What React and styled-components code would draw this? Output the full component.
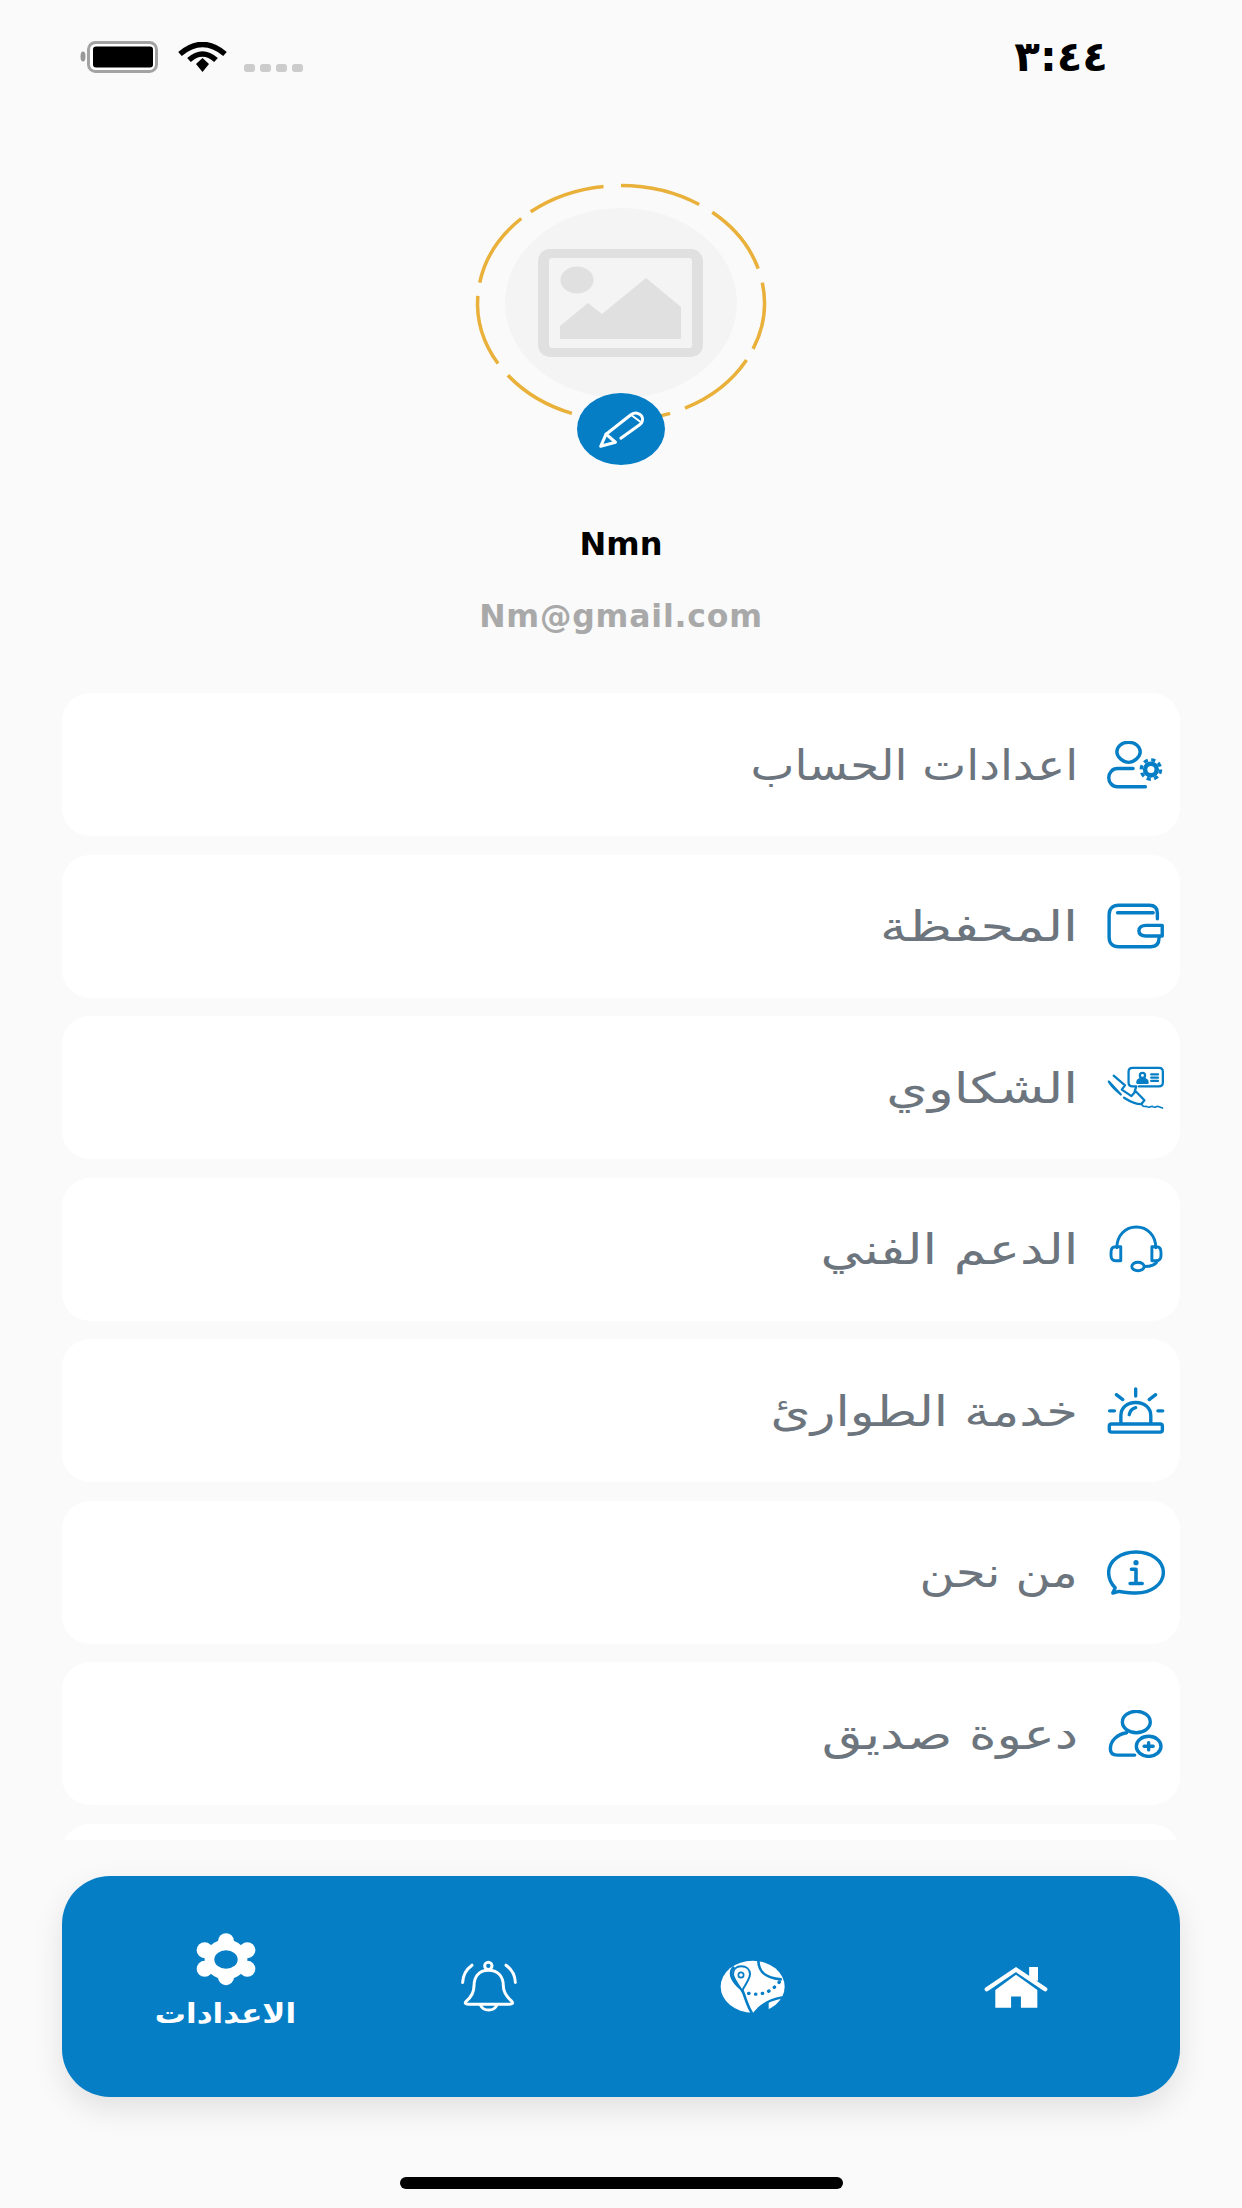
import React from "react";
import styled, { createGlobalStyle } from "styled-components";

const BLUE = "#057ec6";

const GlobalStyle = createGlobalStyle`
  html, body {
    margin: 0;
    padding: 0;
    background: #fafafa;
    font-family: "DejaVu Sans", sans-serif;
  }
`;

// ring dashes are not even on the ellipse, angles read off the screenshot
const ringDashes = [
  [-10, 23],
  [29, 63.5],
  [70, 103],
  [110, 142],
  [149, 183.5],
  [190, 226],
  [231, 263],
  [270, 303],
  [309.5, 343],
];

const ringPath = ([from, to]) => {
  const point = (deg) => {
    const t = (deg * Math.PI) / 180;
    return `${(621 + 143.5 * Math.cos(t)).toFixed(1)} ${(303 + 117.5 * Math.sin(t)).toFixed(1)}`;
  };
  return `M${point(from)} A143.5 117.5 0 0 1 ${point(to)}`;
};

const Line = (props) => (
  <g fill="none" stroke={BLUE} strokeWidth="10.5" strokeLinecap="round" strokeLinejoin="round" {...props} />
);

const UserGearIcon = () => (
  <svg viewBox="80 60 178 148" width="58" height="48">
    <Line>
      <path d="M146 64C124 64 110 78 110 94C110 110 130 126 146 126C162 126 182 110 182 94C182 78 168 64 146 64Z" />
      <path d="M160 145H112C96 145 85 158 85 173C85 188 96 201 112 201H198" />
      <circle cx="215" cy="148" r="18" strokeWidth="14" />
      <circle cx="215" cy="148" r="30" strokeWidth="10" strokeLinecap="butt" strokeDasharray="13 10.56" />
    </Line>
  </svg>
);

const WalletIcon = () => (
  <svg viewBox="80 546 178 142" width="58" height="46">
    <Line>
      <path d="M235 595V578C235 562 226 553 210 553H115C97 553 86 564 86 582V652C86 670 97 681 115 681H215C232 681 240 672 240 655V650" />
      <path d="M112 576H222" />
      <path d="M250 615H200C186 615 178 622 178 632C178 642 186 648 200 648H250Z" />
    </Line>
  </svg>
);

const ComplaintIcon = () => (
  <svg viewBox="80 72 178 136" width="58" height="44">
    <Line strokeWidth="7">
      <path d="M178 135H240C248 135 252 131 252 123V90C252 82 248 78 240 78H158C150 78 146 82 146 90V123C146 131 150 135 158 135H170L165 150" />
      <path d="M173 124C173 115 180 112 189 112C198 112 205 115 205 124Z" fill={BLUE} />
      <circle cx="189" cy="101" r="8" />
      <path d="M216 98H237M216 108H237M216 118H237" />
      <path d="M100 102L135 132L125 145L155 165L168 150L195 178L185 190C165 190 148 180 132 170M122 160C106 146 92 135 85 120Z" />
      <path d="M186 190C192 203 198 194 204 198C210 204 216 193 222 198C228 204 234 193 240 198L251 202" strokeWidth="5" />
    </Line>
  </svg>
);

const HeadsetIcon = () => (
  <svg viewBox="84 550 170 148" width="56" height="48">
    <Line strokeWidth="9">
      <path d="M110 620C110 582 136 556 170 556C204 556 230 582 230 620" />
      <path d="M122 617H106C96 617 92 624 92 634V644C92 654 96 660 106 660H122Z" />
      <path d="M218 617H232C242 617 246 624 246 634V644C246 654 242 660 232 660H218Z" />
      <ellipse cx="175" cy="678" rx="19" ry="13" />
      <path d="M195 678C214 678 232 672 234 660" />
    </Line>
  </svg>
);

const AlarmIcon = () => (
  <svg viewBox="80 46 178 146" width="58" height="47">
    <Line>
      <rect x="86" y="161" width="165" height="25" rx="7" />
      <path d="M122 157V135C122 110 142 94 168 94C194 94 215 110 215 135V157" />
      <path d="M148 132C150 120 156 113 168 110" />
      <path d="M168 52V74M108 70L128 85M230 70L210 85M87 120H102M237 120H252" />
    </Line>
  </svg>
);

const InfoIcon = () => (
  <svg viewBox="80 534 178 136" width="58" height="45">
    <Line>
      <path d="M105 649C92 636 85 620 85 602C85 566 122 539 169 539C216 539 253 566 253 602C253 638 216 665 169 665C150 665 130 662 116 660L98 665Z" />
      <path d="M155 592H169V635M151 636H188" strokeWidth="11" />
    </Line>
    <circle cx="169" cy="572" r="8" fill={BLUE} />
  </svg>
);

const AddUserIcon = () => (
  <svg viewBox="84 1016 170 148" width="56" height="48">
    <Line>
      <ellipse cx="170" cy="1053" rx="43" ry="33" />
      <path d="M165 1155H112C98 1155 90 1148 90 1136C90 1110 112 1090 140 1086" />
      <ellipse cx="208" cy="1128" rx="38" ry="31" />
      <path d="M194 1128H222M208 1117V1139" />
    </Line>
  </svg>
);

const menuItems = [
  { label: "اعدادات الحساب", icon: <UserGearIcon />, stretch: 1.11 },
  { label: "المحفظة", icon: <WalletIcon />, stretch: 1.285 },
  { label: "الشكاوي", icon: <ComplaintIcon />, stretch: 1.27 },
  { label: "الدعم الفني", icon: <HeadsetIcon />, stretch: 1.25 },
  { label: "خدمة الطوارئ", icon: <AlarmIcon />, stretch: 1.22 },
  { label: "من نحن", icon: <InfoIcon />, stretch: 1.14 },
  { label: "دعوة صديق", icon: <AddUserIcon />, stretch: 1.25 },
  { label: "", icon: null, stretch: 1 },
];

const App = () => {
  return (
    <Page>
      <GlobalStyle />

      <StatusBar>
        <StatusIcons>
          <svg viewBox="0 0 78 32" width="78" height="32">
            <ellipse cx="3" cy="15.5" rx="2.5" ry="5" fill="#999" />
            <rect x="8.5" y="1.5" width="68" height="29" rx="7" fill="#fff" stroke="#a3a3a3" strokeWidth="3" />
            <rect x="13" y="5.5" width="60" height="21" rx="3" fill="#000" />
          </svg>
          <svg viewBox="0 0 49 30" width="49" height="30">
            <g fill="none" stroke="#000" strokeWidth="5.5">
              <path d="M2 12Q24.5 -7 47 12" />
              <path d="M11 18Q24.5 6 38 18" />
            </g>
            <path d="M18 22L24.5 16L31 22L24.5 30Z" fill="#000" />
          </svg>
          <SignalDots>
            {[0, 1, 2, 3].map((i) => (
              <SignalDot key={i} />
            ))}
          </SignalDots>
        </StatusIcons>
        <Clock>٣:٤٤</Clock>
      </StatusBar>

      <Profile>
        <Avatar>
          <svg viewBox="473 181 296 244" width="296" height="244">
            <ellipse cx="621" cy="303" rx="116" ry="95" fill="#f4f4f4" />
            <path
              fillRule="evenodd"
              fill="#e0e0e0"
              d="M551 249H690C698 249 703 254 703 262V344C703 352 698 357 690 357H551C543 357 538 352 538 344V262C538 254 543 249 551 249ZM552 258C550 258 549 259 549 261V345C549 347 550 348 552 348H689C691 348 692 347 692 345V261C692 259 691 258 689 258Z"
            />
            <ellipse cx="577" cy="280" rx="16.5" ry="13.5" fill="#e0e0e0" />
            <path d="M560 326L588 303L602 314L646 278L681 307V339H560Z" fill="#e0e0e0" />
            {ringDashes.map((dash) => (
              <path key={dash[0]} d={ringPath(dash)} fill="none" stroke="#e9b03a" strokeWidth="3.5" />
            ))}
          </svg>
          <EditButton>
            <svg viewBox="474 750 140 116" width="47" height="39">
              <g fill="none" stroke="#fff" strokeWidth="9" strokeLinecap="round" strokeLinejoin="round">
                <path d="M498 822L572 764C584 756 598 758 604 768C610 778 606 788 598 794L542 834" />
                <path d="M498 822L482 858L526 846Z" />
                <path d="M572 764L604 788" strokeWidth="6" />
              </g>
            </svg>
          </EditButton>
        </Avatar>
        <UserName>Nmn</UserName>
        <UserEmail>Nm@gmail.com</UserEmail>
      </Profile>

      <Menu>
        {menuItems.map((item, index) => (
          <MenuCard key={`menu${index}`}>
            <MenuIcon>{item.icon}</MenuIcon>
            <MenuLabel $stretch={item.stretch}>{item.label}</MenuLabel>
          </MenuCard>
        ))}
      </Menu>

      <BottomNav>
        <NavItem>
          <svg viewBox="222 38 186 164" width="62" height="55">
            <g fill="#fff">
              <ellipse cx="315" cy="120" rx="64" ry="60" />
              <circle cx="315" cy="65" r="24" />
              <circle cx="315" cy="173" r="24" />
              <circle cx="251" cy="92" r="24" />
              <circle cx="379" cy="92" r="24" />
              <circle cx="251" cy="148" r="24" />
              <circle cx="379" cy="148" r="24" />
            </g>
            <ellipse cx="315" cy="120" rx="35" ry="28" fill={BLUE} />
          </svg>
          <NavLabel>الاعدادات</NavLabel>
        </NavItem>
        <NavItem>
          <svg viewBox="1020 118 174 158" width="58" height="53">
            <g fill="none" stroke="#fff" strokeWidth="9" strokeLinecap="round" strokeLinejoin="round">
              <circle cx="1105" cy="135" r="11" />
              <path d="M1105 148C1075 148 1062 170 1062 195C1062 215 1055 228 1039 241C1033 247 1036 250 1045 250H1168C1178 250 1180 247 1175 241C1160 228 1150 215 1150 195C1150 170 1137 148 1105 148Z" />
              <path d="M1082 254C1090 272 1122 272 1130 254" />
              <path d="M1028 185C1029 160 1038 146 1056 133" />
              <path d="M1186 185C1185 160 1176 146 1158 133" />
            </g>
          </svg>
        </NavItem>
        <NavItem>
          <svg viewBox="118 120 198 162" width="66" height="54">
            <ellipse cx="216" cy="200" rx="96" ry="78" fill="#fff" />
            <g fill="none" stroke={BLUE} strokeLinecap="round">
              <path d="M233 122C234 158 256 174 300 178" strokeWidth="8" />
              <path d="M158 143C142 160 156 186 183 208C192 222 196 250 213 278" strokeWidth="8" />
              <path d="M184 212C202 184 208 174 208 163C208 148 197 139 182 139C167 139 157 148 157 163C157 174 166 186 184 212Z" fill="#fff" strokeWidth="6" />
              <circle cx="181" cy="165" r="8" strokeWidth="5" />
              <path d="M204 220Q260 232 296 186" strokeDasharray="1 19.5" strokeWidth="10" />
              <path d="M222 278C238 256 262 240 304 232" strokeWidth="7" />
            </g>
            <path d="M220 282L240 256L264 246L264 266L250 282Z" fill={BLUE} />
          </svg>
        </NavItem>
        <NavItem>
          <svg viewBox="908 132 194 134" width="64" height="44">
            <path d="M942 208L1005 162L1070 208V262H1020V228H990V262H942Z" fill="#fff" />
            <path d="M1045 138H1072V180H1045Z" fill="#fff" />
            <path d="M916 206L1005 146L1094 206" fill="none" stroke="#fff" strokeWidth="13" strokeLinecap="round" />
          </svg>
        </NavItem>
      </BottomNav>

      <HomeIndicator />
    </Page>
  );
};

export default App;

const Page = styled.div`
  width: 1242px;
  height: 2208px;
  overflow: hidden;
  background: #fafafa;
  display: flex;
  flex-direction: column;
`;

const StatusBar = styled.header`
  height: 114px;
  flex: none;
  padding: 0 134px 0 80px;
  box-sizing: border-box;
  display: flex;
  align-items: center;
  justify-content: space-between;
  direction: ltr;
`;

const StatusIcons = styled.div`
  display: flex;
  align-items: center;
  gap: 20px;
`;

const SignalDots = styled.div`
  display: flex;
  gap: 5px;
  align-self: flex-end;
  margin-bottom: 1px;
  margin-left: -3px;
`;

const SignalDot = styled.span`
  width: 11px;
  height: 8px;
  border-radius: 3px;
  background: #cccccc;
`;

const Clock = styled.div`
  color: #000;
  font-family: "DejaVu Sans", sans-serif;
  font-size: 42px;
  font-weight: bold;
  line-height: 1;
`;

const Profile = styled.section`
  flex: none;
  display: flex;
  flex-direction: column;
  align-items: center;
  padding-top: 67px;
`;

const Avatar = styled.div`
  position: relative;
  width: 296px;
  height: 284px;

  svg {
    display: block;
  }
`;

const EditButton = styled.button`
  position: absolute;
  left: 104px;
  bottom: 0;
  width: 88px;
  height: 72px;
  padding: 0;
  border: 0;
  border-radius: 50%;
  background: ${BLUE};
  display: flex;
  align-items: center;
  justify-content: center;
`;

const UserName = styled.div`
  margin-top: 60px;
  color: #000;
  font-size: 32px;
  font-weight: bold;
  line-height: 38px;
`;

const UserEmail = styled.div`
  margin-top: 33px;
  color: #a9a9a9;
  font-size: 31.5px;
  font-weight: bold;
  letter-spacing: 0.8px;
  line-height: 40px;
`;

const Menu = styled.main`
  height: 1147px;
  flex: none;
  margin: 57px 62px 0;
  overflow: hidden;
  display: flex;
  flex-direction: column;
  gap: 18.5px;
`;

const MenuCard = styled.div`
  height: 143px;
  flex: none;
  box-sizing: border-box;
  padding-right: 15px;
  background: #fff;
  border-radius: 28px;
  direction: rtl;
  display: flex;
  align-items: center;
  gap: 29px;
`;

const MenuIcon = styled.div`
  width: 58px;
  display: flex;
  justify-content: center;

  svg {
    display: block;
  }
`;

const MenuLabel = styled.div`
  color: #6c757d;
  font-size: 42px;
  line-height: 1.2;
  padding-top: 3px;
  transform: scaleX(${(props) => props.$stretch});
  transform-origin: right center;
`;

const BottomNav = styled.nav`
  height: 221px;
  flex: none;
  margin: 36px 62px 0;
  padding: 0 32px;
  box-sizing: border-box;
  background: ${BLUE};
  border-radius: 48px;
  box-shadow: 0 12px 30px rgba(0, 0, 0, 0.1);
  display: grid;
  grid-template-columns: repeat(4, 1fr);
  align-items: center;
`;

const NavItem = styled.div`
  display: flex;
  flex-direction: column;
  align-items: center;
  gap: 12px;

  svg {
    display: block;
  }
`;

const NavLabel = styled.div`
  color: #fff;
  font-size: 27px;
  font-weight: bold;
  line-height: 30px;
  margin-bottom: 12px;
  direction: rtl;
  transform: scaleX(1.15);
`;

const HomeIndicator = styled.div`
  width: 443px;
  height: 12px;
  flex: none;
  margin: 80px auto 0;
  border-radius: 6px;
  background: #000;
`;
